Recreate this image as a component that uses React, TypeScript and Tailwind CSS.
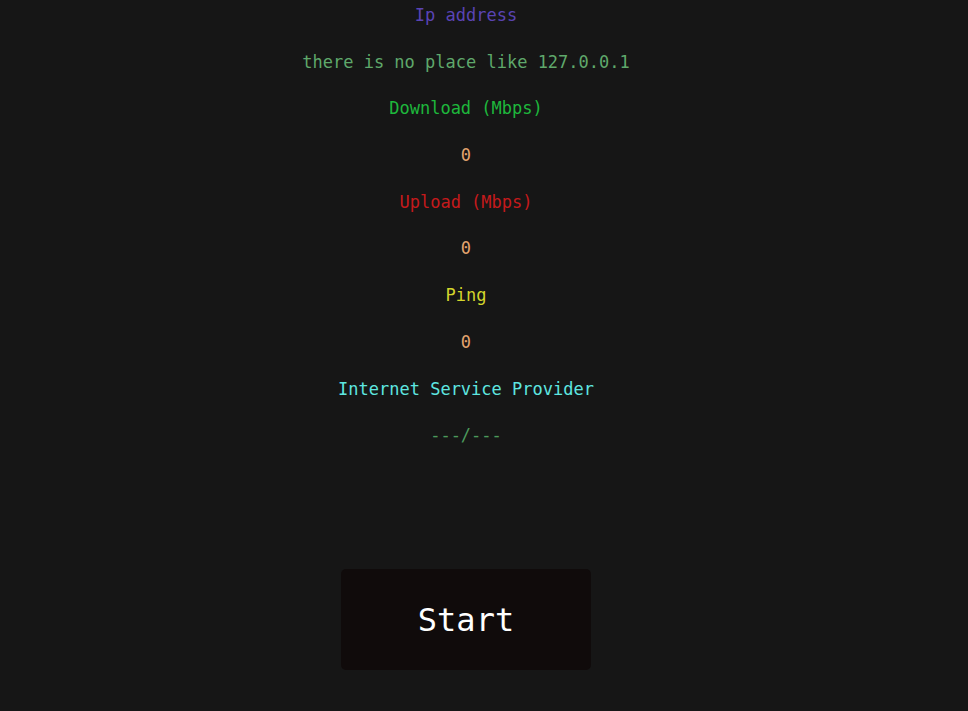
const rows: { text: string; color: string }[] = [
  { text: "Ip address", color: "text-[#5a44b4]" },
  { text: "there is no place like 127.0.0.1", color: "text-[#5fa86b]" },
  { text: "Download (Mbps)", color: "text-[#1eb83c]" },
  { text: "0", color: "text-[#e3a46f]" },
  { text: "Upload (Mbps)", color: "text-[#c41a1c]" },
  { text: "0", color: "text-[#e3a46f]" },
  { text: "Ping", color: "text-[#d3d52c]" },
  { text: "0", color: "text-[#e3a46f]" },
  { text: "Internet Service Provider", color: "text-[#5ee6e0]" },
  { text: "---/---", color: "text-[#4c9a5c]" },
];

export default function App() {
  return (
    <div className="min-h-[711px] w-full bg-[#161616] font-['DejaVu_Sans_Mono',monospace]">
      <div className="flex w-[932px] flex-col items-center pt-[5px]">
        <div className="flex flex-col items-center gap-[26.7px]">
          {rows.map((r, i) => (
            <p key={i} className={`text-[17px] leading-[20px] ${r.color}`}>
              {r.text}
            </p>
          ))}
        </div>
        <button className="mt-[124px] flex h-[101px] w-[250px] items-center justify-center rounded-[5px] bg-[#100b0b] text-[32px] text-white">
          Start
        </button>
      </div>
    </div>
  );
}
